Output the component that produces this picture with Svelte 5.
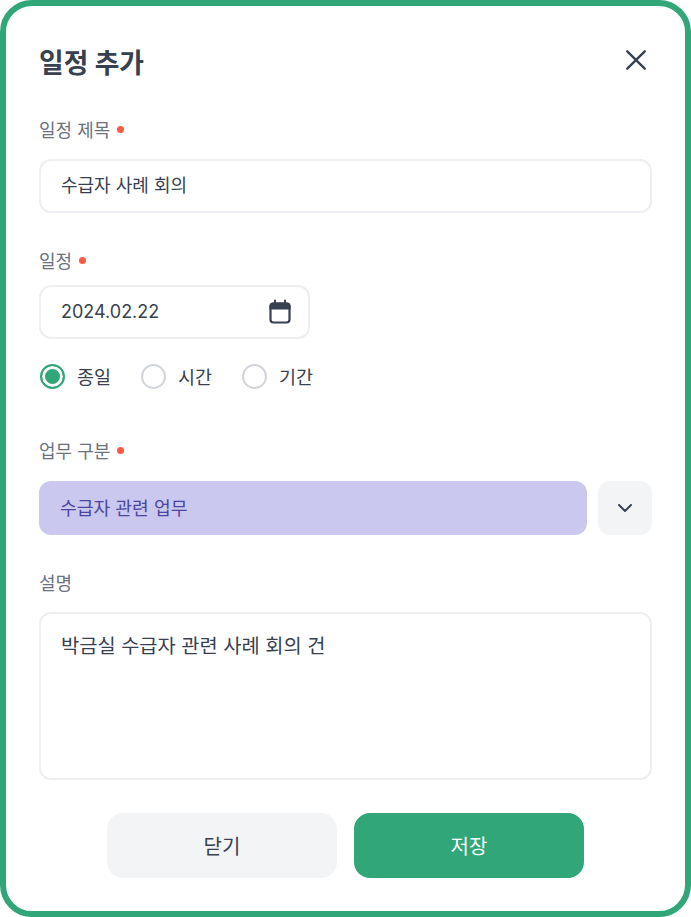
<script>
  let title = $state('수급자 사례 회의');
  let date = $state('2024.02.22');
  let mode = $state('종일');
  const modes = ['종일', '시간', '기간'];
</script>

<div class="modal">
  <header class="head">
    <h1>일정 추가</h1>
    <button class="close" aria-label="닫기">
      <svg width="24" height="24" viewBox="0 0 24 24" fill="none" stroke="#374151" stroke-width="2.600" stroke-linecap="round">
        <path d="M2.500 2.500L21.500 21.500M21.500 2.500L2.500 21.500" transform="translate(1 1) scale(.917)" />
      </svg>
    </button>
  </header>

  <section class="field first">
    <div class="label tight">일정 제목<span class="dot"></span></div>
    <div class="input">{title}</div>
  </section>

  <section class="field second">
    <div class="label short">일정<span class="dot"></span></div>
    <div class="input date">
      <span>{date}</span>
      <svg width="24" height="26" viewBox="0 0 24 26" fill="none">
        <path d="M7 1.500v3M17 1.500v3" stroke="#374151" stroke-width="2" stroke-linecap="round" />
        <path d="M5 3.500h14a3.500 3.500 0 0 1 3.500 3.500v3.500H1.500V7A3.500 3.500 0 0 1 5 3.500z" fill="#374151" />
        <rect x="2.500" y="4.500" width="19" height="19" rx="3" stroke="#374151" stroke-width="2.200" />
      </svg>
    </div>
    <div class="radios">
      {#each modes as m}
        <button class="radio" class:on={mode === m} onclick={() => (mode = m)}>
          <span class="ring"></span>{m}
        </button>
      {/each}
    </div>
  </section>

  <section class="field third">
    <div class="label">업무 구분<span class="dot"></span></div>
    <div class="select-row">
      <div class="select">수급자 관련 업무</div>
      <button class="chevron" aria-label="열기">
        <svg width="16" height="10" viewBox="0 0 16 10" fill="none" stroke="#374151" stroke-width="2" stroke-linecap="round" stroke-linejoin="round">
          <path d="M2 2l6 6 6-6" />
        </svg>
      </button>
    </div>
  </section>

  <section class="field fourth">
    <div class="label tight">설명</div>
    <div class="input area">박금실 수급자 관련 사례 회의 건</div>
  </section>

  <footer class="actions">
    <button class="btn cancel">닫기</button>
    <button class="btn save">저장</button>
  </footer>
</div>

<style>
  :global(body) {
    margin: 0;
    background: #fff;
  }

  .modal {
    box-sizing: border-box;
    width: 691px;
    height: 917px;
    padding: 0 33px;
    border: 6px solid #31a678;
    border-radius: 32px;
    background: #fff;
    font-family: Inter, "Noto Sans CJK KR", "Noto Sans", sans-serif;
    color: #374151;
  }

  button {
    font-family: inherit;
    border: 0;
    background: none;
    padding: 0;
  }

  .head {
    display: flex;
    justify-content: space-between;
    align-items: center;
    height: 51px;
    padding-top: 32px;
  }

  h1 {
    margin: -1px 0 0;
    font-size: 26.800px;
    font-weight: 700;
    line-height: 50px;
  }

  .close {
    display: flex;
    margin-right: 4px;
    margin-top: -7px;
  }

  .field.first { margin-top: 27px; }
  .field.second { margin-top: 34px; }
  .field.third { margin-top: 48px; }
  .field.fourth { margin-top: 34px; }

  .label {
    display: flex;
    align-items: center;
    height: 26px;
    margin-bottom: 18px;
    font-size: 18px;
    color: #6b7280;
  }

  .label.tight {
    margin-bottom: 17px;
  }

  .label.short {
    margin-bottom: 12px;
  }

  .dot {
    width: 7px;
    height: 7px;
    margin-left: 7px;
    border-radius: 50%;
    background: #ff5a43;
  }

  .input {
    box-sizing: border-box;
    height: 54px;
    padding: 0 20px;
    border: 2px solid #eceef1;
    border-radius: 12px;
    font-size: 18px;
    line-height: 50px;
  }

  .date {
    display: flex;
    justify-content: space-between;
    align-items: center;
    width: 271px;
    padding-right: 16px;
  }

  .radios {
    display: flex;
    gap: 30px;
    margin-top: 24px;
    padding-left: 1px;
  }

  .radio {
    display: flex;
    align-items: center;
    gap: 12px;
    height: 26px;
    font-size: 18.500px;
    color: #374151;
  }

  .ring {
    box-sizing: border-box;
    display: block;
    width: 25px;
    height: 25px;
    border: 2.500px solid #d1d5db;
    border-radius: 50%;
    background: #fff;
  }

  .on .ring {
    border-color: #31a678;
    background: #31a678;
    box-shadow: inset 0 0 0 3px #fff;
  }

  .select-row {
    display: flex;
    gap: 11px;
  }

  .select {
    flex: 1;
    height: 54px;
    padding: 0 21px;
    border-radius: 12px;
    background: #cac8ee;
    font-size: 18.200px;
    line-height: 54px;
    color: #4a469e;
  }

  .chevron {
    display: flex;
    align-items: center;
    justify-content: center;
    width: 54px;
    height: 54px;
    border-radius: 12px;
    background: #f3f4f6;
  }

  .area {
    height: 168px;
    padding-top: 7px;
    font-size: 19.800px;
  }

  .actions {
    display: flex;
    justify-content: center;
    gap: 17px;
    margin-top: 33px;
  }

  .btn {
    height: 65px;
    width: 230px;
    border-radius: 16px;
    font-size: 20px;
    font-weight: 400;
  }

  .cancel {
    background: #f3f4f6;
    color: #374151;
  }

  .save {
    background: #31a678;
    color: #fff;
  }
</style>
